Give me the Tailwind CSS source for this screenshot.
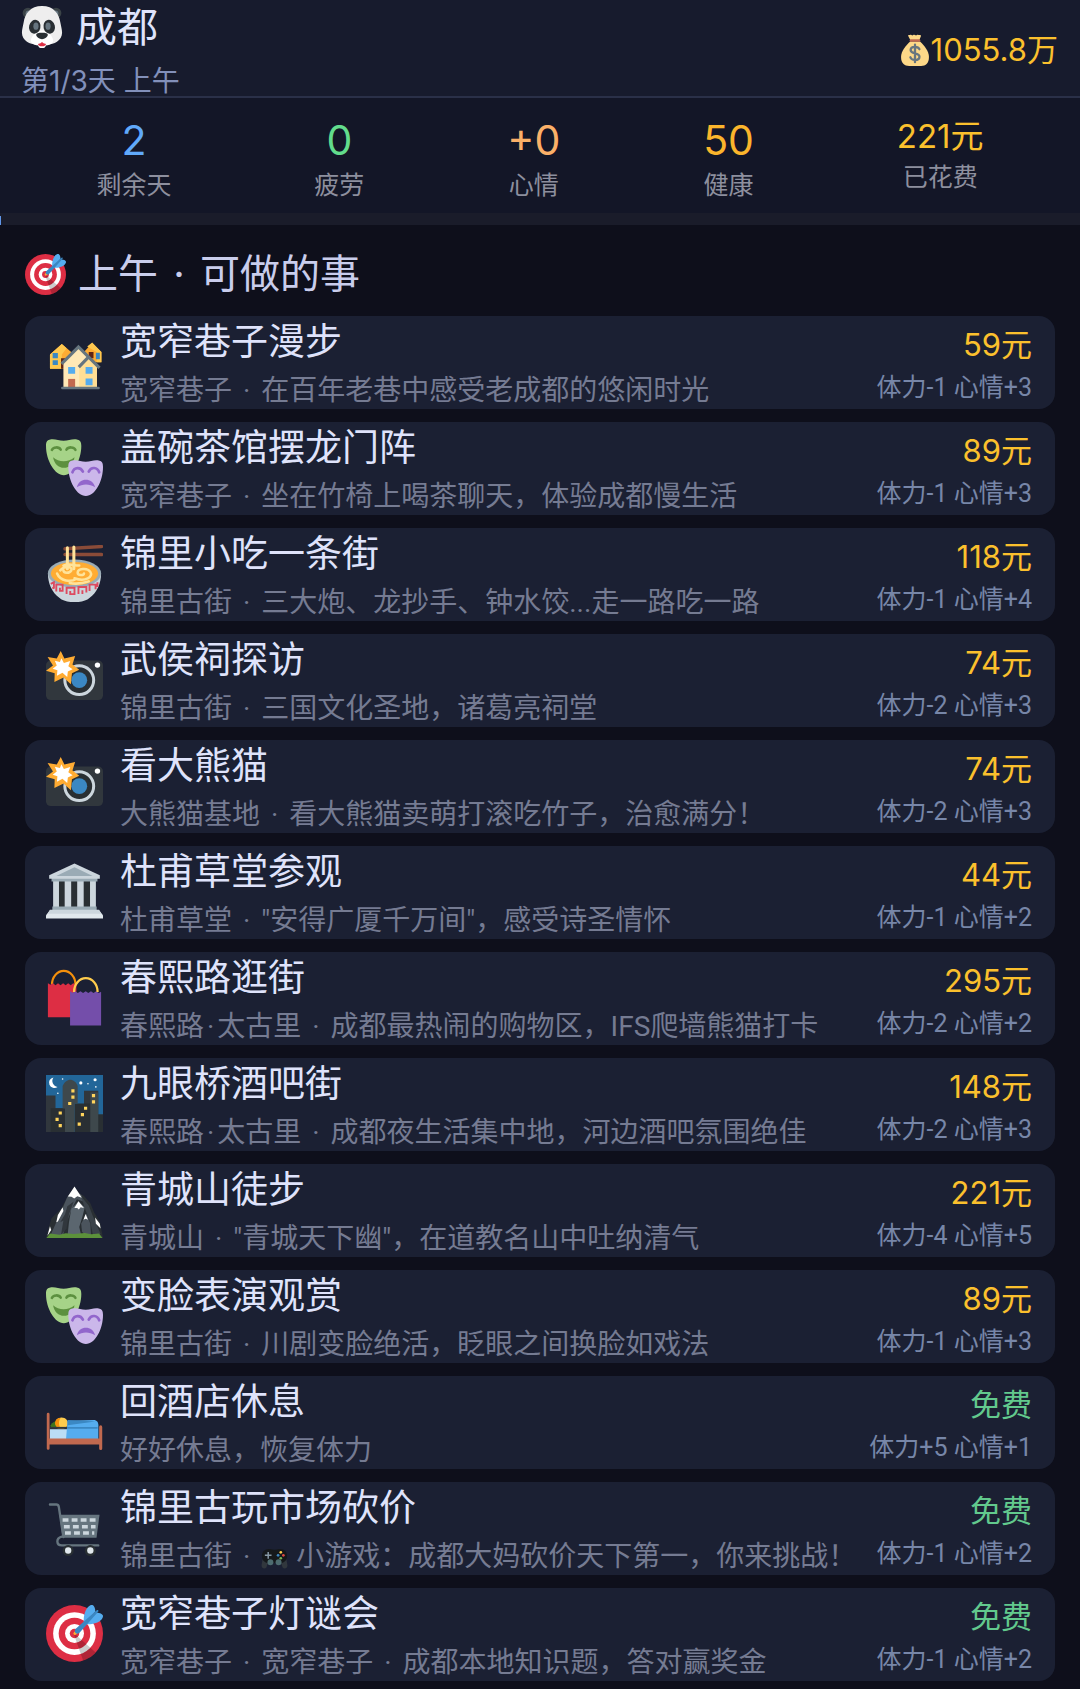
<!DOCTYPE html>
<html lang="zh-CN">
<head>
<meta charset="utf-8">
<meta name="viewport" content="width=device-width, initial-scale=1">
<title>成都</title>
<script src="https://cdn.jsdelivr.net/npm/@tailwindcss/browser@4"></script>
</head>
<body class="min-h-screen bg-[#0e0f1b] font-['Inter','Noto_Sans_CJK_SC',sans-serif] font-normal text-[#dfe3fb]">

<svg class="hidden" aria-hidden="true">
  <symbol id="dart" viewBox="0 0 36 36">
    <circle cx="18" cy="18" r="18" fill="#dd2e44"/><circle cx="18" cy="18" r="13.5" fill="#fff"/><circle cx="18" cy="18" r="10" fill="#dd2e44"/><circle cx="18" cy="18" r="6" fill="#fff"/><circle cx="18" cy="18" r="3" fill="#dd2e44"/>
    <path opacity=".2" d="M18.24 18.282l13.144 11.754s-2.647 3.376-7.89 5.109L17.579 18.42l.661-.138z"/>
    <path fill="#ffac33" d="M18.294 19a.994.994 0 0 1-.704-1.699l.563-.563a.995.995 0 0 1 1.408 1.407l-.564.563a.987.987 0 0 1-.703.292z"/>
    <path fill="#55acee" d="M24.016 6.981c-.403 2.079 0 4.691 0 4.691l7.054-7.388c.291-1.454-.528-3.932-1.718-4.238-1.19-.306-4.079.803-5.336 6.935zm5.003 5.003c-2.079.403-4.691 0-4.691 0l7.388-7.054c1.454-.291 3.932.528 4.238 1.718.306 1.19-.803 4.079-6.935 5.336z"/>
    <path fill="#3a87c2" d="M32.798 4.485L21.176 17.587c-.362.362-1.673.882-2.51.046-.836-.836-.419-2.08-.057-2.443L31.815 3.501s.676-.635 1.159-.152-.176 1.136-.176 1.136z"/>
  </symbol>
  <symbol id="panda" viewBox="0 0 36 36">
    <circle cx="6" cy="6" r="4.6" fill="#3b4347"/><circle cx="30" cy="6" r="4.6" fill="#3b4347"/><circle cx="6.5" cy="6.5" r="2.6" fill="#66757f"/><circle cx="29.5" cy="6.5" r="2.6" fill="#66757f"/>
    <path fill="#eee" d="M18 0C8 0 3.500 6.500 2.300 14 1.500 18 .8 20.500.8 23c0 7 7.500 10 12 10h10.400c4.500 0 12-3 12-10 0-2.500-.7-5-1.500-9C32.500 6.500 28 0 18 0z"/>
    <path fill="#fff" d="M18 21c-4 0-9.500 4.500-9.500 8.500C8.500 33 14 34 18 34s9.500-1 9.500-4.500c0-4-5.500-8.500-9.500-8.500z"/>
    <ellipse cx="11.800" cy="17.800" rx="4.900" ry="6" fill="#292f33" transform="rotate(14 11.800 17.800)"/><ellipse cx="24.200" cy="17.800" rx="4.900" ry="6" fill="#292f33" transform="rotate(-14 24.200 17.800)"/>
    <ellipse cx="12.800" cy="17.300" rx="2.200" ry="3.100" fill="#66757f"/><ellipse cx="23.200" cy="17.300" rx="2.200" ry="3.100" fill="#66757f"/>
    <path fill="#292f33" d="M13 24.700c0-1.300 2-1.700 5-1.700s5 .4 5 1.700c0 1.800-2.800 3.800-5 3.800s-5-2-5-3.800z"/>
    <ellipse cx="18" cy="33.800" rx="3.200" ry="2.200" fill="#fff"/><path fill="#dd2e44" d="M14.500 32.500l2.200-.6 1.300-1 1.300 1 2.200.6c-.4 1.500-1.700 2-3.500 2s-3.100-.5-3.500-2z"/>
  </symbol>
  <symbol id="bag" viewBox="0 0 36 36">
    <path fill="#fdd888" d="M12.500 8.500C8 13 2.300 19 2.300 26c0 7 3.700 10 9.200 10h13.300c5.500 0 8.900-3 8.900-10 0-7-5.500-13-10-17.500z"/>
    <path fill="#fdd888" d="M11 1.200c1.200.2 1.800-1 3 0 1.300 1 1.900-.3 3-.3s1.800 1.300 3.100.3c1.200-1 2.200.2 3.500 0 1.400-.2 1.300 1.200.6 2.500L22.700 7h-9.800l-1.800-3.300C10.500 2.500 9.700 1 11 1.200z"/>
    <rect x="12" y="6" width="12" height="2.800" rx="1.400" fill="#bf6952"/>
    <path d="M22.900 17.100c-.7-1.900-2.600-2.600-4.900-2.600-2.900 0-4.900 1.400-4.900 3.600 0 5 9.900 2.300 9.900 7.400 0 2.400-2.200 3.700-5 3.700-2.700 0-4.600-1-5.200-3M18 12v19.700" fill="none" stroke="#67757f" stroke-width="2.600" stroke-linecap="round"/>
  </symbol>
  <symbol id="houses" viewBox="0 0 36 36">
    <path fill="#ffac33" d="M2.500 13.500L10 7l7 6v9.500H2.500zM24 12l5-5.500 6 5.500v6.500H24z"/><path fill="#ffc84f" d="M2.500 13.500L10 7l3 2.700-3 3.800v9H2.500zM26 8.500L29.200 6 35 12v6.500h-3V12z"/>
    <path fill="#5f2416" d="M9.500 16h4v6.500h-4zM27 12h3v4h-3z"/><path fill="#3b88c3" d="M4.200 12.700h3.300v3.200H4.200zm0 4.500h3.300v3H4.200zM31.500 12.500H34v4h-2.500z"/>
    <path fill="#ffe8b6" d="M11 34.500V18.800L20.500 9l6 6.300 5.700 5.800v13.400z"/><path fill="#ffd983" d="M21 20.500l4.800-5 6.400 6v13H21z" opacity=".65"/>
    <path d="M9.800 19.500L20.500 8.800 33.800 22M20.700 21.500l5.800-5.900" fill="none" stroke="#66757f" stroke-width="2"/>
    <path fill="#55acee" d="M14 21.500h4.400v4.200H14zm11 0h4.400v4.200H25zm0 7.300h4.400v4.200H25z"/><path fill="#c1694f" d="M14 29h4.400v5.500H14z"/><rect x="9.500" y="34" width="24.500" height="1.600" rx=".8" fill="#66757f"/>
  </symbol>
  <symbol id="masks" viewBox="0 0 36 36">
    <path fill="#a6d388" d="M2.200.4c3.200-1 5.500.7 8.900.7S16.800-.6 20 .4c1.700.5 2.300 1.500 2.300 4 0 9-5.300 18.500-11 18.500S0 13.500 0 4.400C0 1.900.5.900 2.200.4z"/>
    <path d="M3.700 6.900c.8-2 4.400-2.200 5.600-.2M12.900 6.700c1.200-2 5-1.800 5.700.2" fill="none" stroke="#5c903f" stroke-width="1.600" stroke-linecap="round"/>
    <path fill="#5c903f" d="M4.500 11.500c3.500 3.300 9.700 3.300 13.500 0-.5 4-3.200 6.700-6.600 6.700s-6.400-2.700-6.900-6.700z"/>
    <path fill="#cbb7ea" d="M16.200 13.700c3.200-1 5.500.6 8.900.6s5.600-1.600 8.700-.6c1.700.5 2.200 1.500 2.200 4C36 26.700 31 36 25.200 36s-11.100-9.300-11.100-18.300c0-2.500.4-3.500 2.100-4z"/>
    <path d="M16.700 21c1.200-3.400 5.200-3.400 6.600-.4M27 20.600c1.500-3.200 5.400-3 6.600.4" fill="none" stroke="#9266cc" stroke-width="1.700" stroke-linecap="round"/>
    <path fill="#9266cc" d="M19.500 30.500c1-3.300 3-4.700 5.700-4.700s4.800 1.400 5.800 4.700c-3.800-2.300-7.700-2.300-11.500 0z"/>
  </symbol>
  <symbol id="ramen" viewBox="0 0 36 36">
    <path d="M12 2.400L35 1M12 6h23" stroke="#8a4b38" stroke-width="2.200" stroke-linecap="round"/>
    <path fill="#ccd6dd" d="M1.200 18h33.600c0 6-2.400 12-7.400 15.500C24 37 12 37 8.600 33.500 3.600 30 1.200 24 1.200 18z"/>
    <ellipse cx="18" cy="18" rx="16.800" ry="8.900" fill="#9aabb5"/><ellipse cx="18" cy="18" rx="14.900" ry="7.300" fill="#ffac33"/>
    <path d="M7 18c2 5 9 5.500 12 3.500M9 16c3-3.500 8-2 7 0s-5 2-5 0M18 21c7 2.500 12-1 10-4s-8-2-8 .5c0 1.800 4 2 4 .5M11 13c4-1.500 6 0 10 0M15 24c5 1 9 0 12-1" fill="none" stroke="#ffe39a" stroke-width="1.600" stroke-linecap="round"/>
    <path d="M13.500 1.800V15M17.600 1.200V15" stroke="#ffe39a" stroke-width="1.900" stroke-linecap="round"/>
    <path d="M3 24.500l2-1v3.500l-1 .3m2.500 2V25h4v4H8.800v-2M13 31v-4h5v4h-2.700v-2M20.500 31v-4.500h5V30M23 28.500v2.500M27.500 29v-4h3.800v3M32.500 23.500v3" fill="none" stroke="#dd4a5f" stroke-width="1.200"/>
  </symbol>
  <symbol id="camera" viewBox="0 0 36 36">
    <rect y="6" width="36" height="25" rx="3" fill="#31373d"/><circle cx="21" cy="18.400" r="9.100" fill="#292f33" stroke="#ccd6dd" stroke-width="1.900"/><circle cx="21" cy="18.400" r="5" fill="#3b88c3"/><circle cx="32.500" cy="8.900" r="1.700" fill="#fff"/>
    <path fill="#ffac33" d="M9.300 0l2.300 4.700 6.800-1.500-1.700 5.400L21 11.800l-4.600 2.300-.7 6.900-4.600-4.200-5.800 2.700.2-5.500-5.500-1.600 4.400-3.300L1 3.800l5.800 1z"/>
    <path fill="#fff" d="M9.700 4.500l1.600 3 4-1.200-1.200 3.300 2.700 2-3 1.300-.4 3.500-3-2.600-3.500 1.800.3-3.400-3-1 2.600-2-1.200-3.100 3.200.8z"/>
  </symbol>
  <symbol id="temple" viewBox="0 0 36 36">
    <path fill="#292f33" d="M6 11h24v18H6z"/>
    <path fill="#ccd6dd" d="M4.500 11h3.700v17H4.500zM11.800 11h4.100v17h-4.100zm7.900 0h4.100v17h-4.100zm8.100 0h3.700v17h-3.700z"/><path fill="#9aabb5" d="M3.500 9h29v2.700h-29zM4 27.500h28V30H4z"/>
    <path fill="#ccd6dd" d="M18 .3L34 7.800V10H2V7.800z"/><path fill="#9aabb5" d="M18 2.700l11.500 5.500h-23z"/><path fill="#e1e8ed" d="M2.500 29.800h31L36 33v2H0v-2z"/><path fill="#ccd6dd" d="M2.500 29.500h31L35 32H1z"/>
  </symbol>
  <symbol id="bags" viewBox="0 0 36 36">
    <path d="M3.800 9.800a7.300 8.500 0 0 1 14.800 0" fill="none" stroke="#f4900c" stroke-width="1.400"/>
    <path fill="#dd2e44" d="M1.200 9l1.600.9L4.400 9 6 10.200 7.600 9l1.600 1.200L10.800 9l1.600 1.200L14 9l1.600 1.200L17.200 9l2 1V30.500h-18z"/>
    <path fill="#744eaa" d="M15.200 14l1.600 1 1.700-1 1.600 1.200 1.700-1.200 1.600 1.200 1.700-1.200 1.600 1.200 1.700-1.200 1.600 1.200 1.700-1.200 1.600 1.200 1.500-.9v21.400H15.200z"/>
    <path d="M17.700 14.500a7.300 8.500 0 0 1 14.900 0" fill="none" stroke="#ffcc4d" stroke-width="1.400"/>
  </symbol>
  <symbol id="night" viewBox="0 0 36 36">
    <clipPath id="nightclip"><rect width="36" height="36" rx="4"/></clipPath>
    <g clip-path="url(#nightclip)">
      <path fill="#226699" d="M0 0h36v36H0z"/><path fill="#31373d" d="M0 13h6v8h5v15H0zM24 10h9v15h3v11H24z"/>
      <path fill="#292f33" d="M3 21h9v15H3zM18 18h10v18H18zM31 25h5v11h-5z"/><path fill="#3e484c" d="M10.500 7c1-2.500 3-4 4.800-4s4 1.500 4.700 4v11h-2v18h-6V21h-1.500zM28 11h5v25h-5z"/>
      <path fill="#fff" d="M4.700 1.500a3.400 3.400 0 1 0 2.600 6.100A3.900 3.900 0 0 1 4.700 1.500z"/>
      <g fill="#fff"><circle cx="22" cy="5" r="1"/><circle cx="31" cy="3" r="1"/><circle cx="10.500" cy="2.500" r=".5"/><circle cx="26.500" cy="5.500" r=".5"/><circle cx="31.500" cy="7.500" r=".5"/><circle cx="7.500" cy="11.500" r=".5"/></g>
      <path fill="#ffd45c" d="M16 9h2v2h-2zm0 4h2v2h-2zm-2 4h2v2h-2zm15-5h2v2h-2zm0 4h2v2h-2zm-5 4h2v2h-2zm-2 4h2v2h-2zm-2 6h2v2h-2zM8 23h2v2H8zm-2 4h2v2H6zm2 4h2v2H8z"/>
    </g>
  </symbol>
  <symbol id="mountain" viewBox="0 0 36 36">
    <path fill="#292f33" d="M18 3.500l-4.500 6.500-4 7.500-6 6L1.800 29 0 36h36l-2-10.500-3.500-5.500-2.500-6-4-4.500-3-2z"/>
    <path fill="#4b545d" d="M17.500 5L13.500 10l-3 7-4 9L2.500 35h8l3-10 3-8 3-5.500 4 1.500-1-4z"/>
    <path fill="#5b666f" d="M20.500 13L16 17.500 14.500 26l-1 9.500h9L21 29l2-6.500 1.500-6z"/>
    <path fill="#31373d" d="M13.500 16L12 21l-3 5 2-1-1.500 9 3.500-4 1.500-9 3-8z"/>
    <path fill="#4b545d" d="M25.500 20.500L22.200 27l.6 5 2.700 3h3l-.5-8z"/>
    <path fill="#3b434a" d="M22 9.500l5 6 2.500 6.500 5 11.500h-5L28 26l-3-7.500z"/>
    <path fill="#fff" d="M18 3.500l-4.200 6.300 2.300.2 1.700 1 2-1.300 2.800.8zM20.500 12.800L17.900 17l1.800.1 1 .9 1.200-1.400 2 .4zM10.500 16.500l-3 5L6.500 26l1-.5L11 19zM2.500 28.500L.9 34.500 3.300 31zM25 20.800l-1.300 3.700 1.300-.7 1.500.7zM31 23l3 4 .5 3-3-3z"/>
    <path fill="#5c913b" d="M0 36.400l2.500-3.200 6 .8 4-1 5 .5 7-.6 4 .7 5-.4 2.500 3.200z"/>
  </symbol>
  <symbol id="bed" viewBox="0 0 36 37">
    <path fill="#3e721d" d="M2.500 21c1-2 3-3 5-3v4h-5z"/><path fill="#ffcc4d" d="M6 18c1.500-2.500 5-2.800 7-.5 1.500 2 .5 5-2 5.500H7z"/><path fill="#f4900c" d="M5.500 18.500C6 16.800 7.500 16 9 16.300 7.600 18 7.600 21 9 22.800c-2.500.2-4.200-2-3.500-4.300z"/>
    <path fill="#bbddf5" d="M2 23.500h12V30H2z"/><path fill="#55acee" d="M13.500 18l17-.5c2 0 3 1.500 3 3.500v9h-21z"/><path fill="#3b88c3" d="M13.500 17.500l18 1-18 2.500zM13 22h20v1.200H13z"/><path fill="#31373d" d="M2 22h11v1.200H2z"/>
    <path fill="#c1694f" d="M0 13.800a.9.900 0 0 1 1.800 0V29.500H34V22a1 1 0 0 1 2 0v14a1 1 0 0 1-2 0v-2.500H1.800V36A.9.900 0 0 1 0 36z"/>
  </symbol>
  <symbol id="cart" viewBox="0 0 36 36">
    <path d="M2.500 3.500h4c1 0 1.400.5 1.600 1.500L11 24" fill="none" stroke="#66757f" stroke-width="1.500" stroke-linecap="round"/>
    <path fill="#66757f" d="M8.500 10h25.300l-1.900 14.500H10.500z"/><path d="M10 23.800c-4 1-3.500 5.500 0 5.500h23" fill="none" stroke="#66757f" stroke-width="1.500" stroke-linecap="round"/>
    <path d="M10.500 13.200h21M11.300 17.500h20M12 21.500h18.500" stroke="#ccd6dd" stroke-width="2.200" stroke-dasharray="3.700 2"/>
    <circle cx="14" cy="32.600" r="3.500" fill="#292f33"/><circle cx="28" cy="32.600" r="3.500" fill="#292f33"/><circle cx="14" cy="32.500" r="2" fill="#e1e8ed"/><circle cx="28" cy="32.500" r="2" fill="#e1e8ed"/>
  </symbol>
  <symbol id="gamepad" viewBox="0 0 36 27">
    <path fill="#31373d" d="M2 14h9l-4 11c-1.500 2.500-6.500 2-6.500-3zm32 0h-9l4 11c1.500 2.500 6.500 2 6.500-3z"/><path fill="#15181b" d="M10 0c3 0 4 1 8 1s5-1 8-1c5.500 0 9 4 9 9.300S31.500 18.500 26 19H10C4.500 18.500 1 14.600 1 9.300S4.500 0 10 0z"/>
    <circle cx="12.500" cy="18" r="4" fill="#4d6b6f"/><circle cx="23.500" cy="18" r="4" fill="#4d6b6f"/><path d="M9.500 4v9M5 8.500h9" stroke="#8899a6" stroke-width="2"/>
    <circle cx="26.500" cy="4.500" r="1.800" fill="#ffcc4d"/><circle cx="30" cy="8.500" r="1.800" fill="#dd4a44"/><circle cx="26.500" cy="12.500" r="1.800" fill="#77b255"/><circle cx="22.800" cy="8.500" r="1.800" fill="#3b88c3"/>
  </symbol>
</svg>

<header class="flex items-center justify-between border-b-2 border-[#2a3048] bg-[#171b2d] pr-[22px] pl-[21px]">
  <div>
    <h1 class="flex items-center gap-[13px] text-[41px] leading-[54px]"><svg class="size-[42px]" aria-hidden="true"><use href="#panda"/></svg>成都</h1>
    <p class="mt-3 text-[28px] leading-[30px] text-[#8290ba]">第1/3天 上午</p>
  </div>
  <p class="flex items-center pt-[3px] text-[31px] leading-10 text-[#fbc02d]"><svg class="size-8" aria-hidden="true"><use href="#bag"/></svg>1055.8万</p>
</header>

<dl class="flex items-start justify-around bg-[#131627] px-[25px] pt-[17px] pb-2 text-center text-[25px] leading-10 text-[#8d8f9e]">
  <div class="flex flex-col-reverse"><dt>剩余天</dt><dd class="text-[41px] leading-[50px] text-[#60a9fa]">2</dd></div>
  <div class="flex flex-col-reverse"><dt>疲劳</dt><dd class="text-[41px] leading-[50px] text-[#62dc8c]">0</dd></div>
  <div class="flex flex-col-reverse"><dt>心情</dt><dd class="text-[41px] leading-[50px] text-[#fbb068]">+0</dd></div>
  <div class="flex flex-col-reverse"><dt>健康</dt><dd class="text-[41px] leading-[50px] text-[#fbb52c]">50</dd></div>
  <div class="flex flex-col-reverse"><dt>已花费</dt><dd class="text-[33px] leading-[42px] text-[#fbc02d]">221元</dd></div>
</dl>
<div class="h-3 bg-[#1a1c2a] pt-[3px]" role="progressbar" aria-label="行程进度" aria-valuenow="0" aria-valuemin="0" aria-valuemax="100">
  <div class="h-full w-px bg-[#6096e8]"></div>
</div>

<main class="px-[25px] pt-6">
  <h2 class="flex items-center gap-3 text-[40px] leading-[50px] text-[#c9cdec]"><svg class="size-[41px]" aria-hidden="true"><use href="#dart"/></svg><span>上午<span class="px-1"> · </span>可做的事</span></h2>
  <ul id="activities" class="mt-[17px] flex flex-col gap-[13px] pb-2"></ul>
</main>

<script>
const dot = '<span class="px-1"> · </span>';
const midDot = '<span class="px-[3px]">·</span>';
const gamepad = '<svg class="mr-2 inline h-5 w-[27px] align-middle" aria-hidden="true"><use href="#gamepad"/></svg>';
const activities = [
  ['houses', '宽窄巷子漫步', `宽窄巷子${dot}在百年老巷中感受老成都的悠闲时光`, '59元', '体力-1 心情+3'],
  ['masks', '盖碗茶馆摆龙门阵', `宽窄巷子${dot}坐在竹椅上喝茶聊天，体验成都慢生活`, '89元', '体力-1 心情+3'],
  ['ramen', '锦里小吃一条街', `锦里古街${dot}三大炮、龙抄手、钟水饺...走一路吃一路`, '118元', '体力-1 心情+4'],
  ['camera', '武侯祠探访', `锦里古街${dot}三国文化圣地，诸葛亮祠堂`, '74元', '体力-2 心情+3'],
  ['camera', '看大熊猫', `大熊猫基地${dot}看大熊猫卖萌打滚吃竹子，治愈满分！`, '74元', '体力-2 心情+3'],
  ['temple', '杜甫草堂参观', `杜甫草堂${dot}"安得广厦千万间"，感受诗圣情怀`, '44元', '体力-1 心情+2'],
  ['bags', '春熙路逛街', `春熙路${midDot}太古里${dot}成都最热闹的购物区，IFS爬墙熊猫打卡`, '295元', '体力-2 心情+2'],
  ['night', '九眼桥酒吧街', `春熙路${midDot}太古里${dot}成都夜生活集中地，河边酒吧氛围绝佳`, '148元', '体力-2 心情+3'],
  ['mountain', '青城山徒步', `青城山${dot}"青城天下幽"，在道教名山中吐纳清气`, '221元', '体力-4 心情+5'],
  ['masks', '变脸表演观赏', `锦里古街${dot}川剧变脸绝活，眨眼之间换脸如戏法`, '89元', '体力-1 心情+3'],
  ['bed', '回酒店休息', '好好休息，恢复体力', '免费', '体力+5 心情+1'],
  ['cart', '锦里古玩市场砍价', `锦里古街${dot}${gamepad}小游戏：成都大妈砍价天下第一，你来挑战！`, '免费', '体力-1 心情+2'],
  ['dart', '宽窄巷子灯谜会', `宽窄巷子${dot}宽窄巷子${dot}成都本地知识题，答对赢奖金`, '免费', '体力-1 心情+2'],
];
document.getElementById('activities').innerHTML = activities.map(([icon, title, detail, price, effect]) => `
  <li><button type="button" class="flex w-full items-center rounded-2xl bg-[#1b2033] pr-[23px] pl-[21px] text-left">
    <svg class="mr-[17px] mb-[2px] size-[57px] shrink-0 overflow-visible" aria-hidden="true"><use href="#${icon}"/></svg>
    <span class="flex min-w-0 flex-1 flex-col gap-[5px] whitespace-nowrap">
      <span class="text-[37px] leading-[52px]">${title}</span>
      <span class="font-['Roboto','Noto_Sans_CJK_SC',sans-serif] text-[28px] leading-[36px] text-[#757b92]">${detail}</span>
    </span>
    <span class="flex shrink-0 flex-col text-right whitespace-nowrap">
      <span class="text-[31px] leading-[49px] ${price === '免费' ? 'text-[#62c98d]' : 'text-[#fbc02d]'}">${price}</span>
      <span class="font-['Roboto','Noto_Sans_CJK_SC',sans-serif] text-[25px] leading-[37px] text-[#7786a8]">${effect}</span>
    </span>
  </button></li>`).join('');
</script>
</body>
</html>
